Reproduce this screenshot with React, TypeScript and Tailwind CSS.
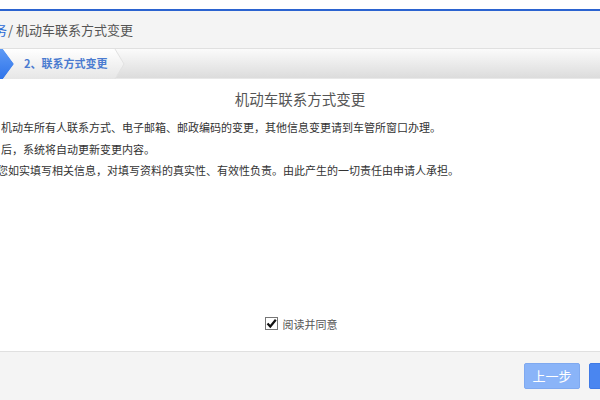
import React from "react";

export default function App() {
  const font = { fontFamily: '"Microsoft YaHei", "Noto Sans CJK SC", sans-serif' };
  return (
    <div className="w-[600px] h-[400px] bg-white overflow-hidden flex flex-col" style={font}>
      <div className="h-[9px] bg-white" />
      <div className="h-[2px] bg-[#2b63d0]" />
      <div className="h-[38px] bg-[#f4f4f4] border-b border-[#e0e0e0] flex items-center text-[13px] text-[#555] whitespace-nowrap pt-[1px]">
        <span className="ml-[-6px] text-[#2a6ad6]">务</span>
        <span className="ml-[1px]">/ 机动车联系方式变更</span>
      </div>
      <div className="relative h-[30px] bg-gradient-to-b from-[#fbfbfb] to-[#dcdcdc] border-b border-[#e8e8e8] flex items-center">
        <svg className="absolute left-0 top-0" width="130" height="30" viewBox="0 0 130 30">
          <defs>
            <linearGradient id="bl" x1="0" y1="0" x2="0" y2="1">
              <stop offset="0" stopColor="#5e9af5" />
              <stop offset="1" stopColor="#2f74ea" />
            </linearGradient>
            <linearGradient id="wh" x1="0" y1="0" x2="0" y2="1">
              <stop offset="0" stopColor="#ffffff" />
              <stop offset="1" stopColor="#e6e6e6" />
            </linearGradient>
          </defs>
          <polygon points="0,0 3,0 14,15 3,30 0,30" fill="url(#bl)" />
          <polygon points="3,0 115,0 124,15 115,30 3,30 14,15" fill="url(#wh)" />
          <polyline points="115,0 124,15 115,30" fill="none" stroke="#e2e2e2" strokeWidth="1" />
        </svg>
        <span className="relative ml-[24px] text-[11px] font-bold text-[#4a7bd0] whitespace-nowrap">2、联系方式变更</span>
      </div>
      <div className="flex-1 flex flex-col">
        <div className="text-center text-[14.5px] text-[#555] mt-[10px] leading-[20px]">机动车联系方式变更</div>
        <div className="text-[11px] text-[#333] leading-[21.5px] mt-[8px] whitespace-nowrap">
          <div className="ml-[1px]">机动车所有人联系方式、电子邮箱、邮政编码的变更，其他信息变更请到车管所窗口办理。</div>
          <div className="ml-[1px]">后，系统将自动更新变更内容。</div>
          <div className="ml-[-3px]">您如实填写相关信息，对填写资料的真实性、有效性负责。由此产生的一切责任由申请人承担。</div>
        </div>
        <div className="flex-1" />
        <div className="flex items-center justify-center mb-[19px] text-[11px] text-[#555]">
          <span className="ml-[2px] w-[13px] h-[13px] border border-[#767676] bg-white flex items-center justify-center">
            <svg width="11" height="11" viewBox="0 0 11 11">
              <path d="M1.5 5.5 L4.3 8.5 L9.8 1.8" fill="none" stroke="#111" strokeWidth="2.2" />
            </svg>
          </span>
          <span className="ml-[5px]">阅读并同意</span>
        </div>
      </div>
      <div className="h-[49px] bg-[#f4f4f4] border-t border-[#e0e0e0] flex items-center justify-end">
        <button className="shrink-0 w-[56px] h-[26px] rounded-[2px] bg-[#8ab4f8] border border-[#7fa9f0] text-white text-[13px] mr-[9px]">上一步</button>
        <button className="shrink-0 w-[80px] h-[26px] rounded-[2px] bg-[#4a86f0] border border-[#3f7ae6] text-white text-[13px] mr-[-69px]">下一步</button>
      </div>
    </div>
  );
}
